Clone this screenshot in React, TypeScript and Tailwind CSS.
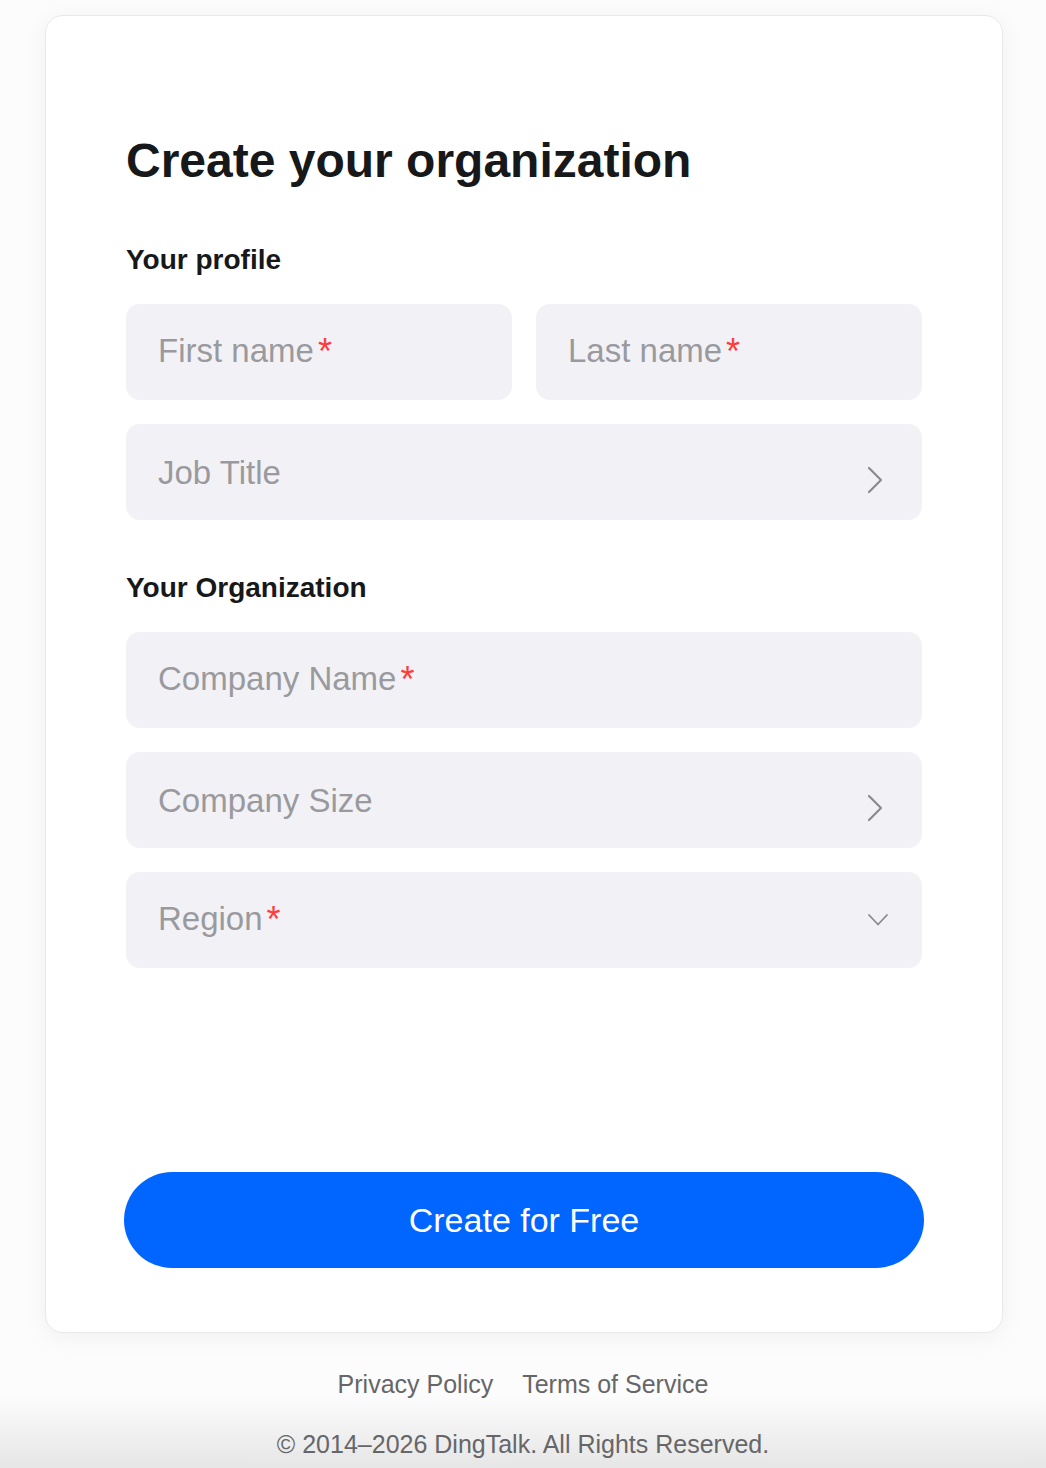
import React from "react";

const font = { fontFamily: '"Liberation Sans", Arial, sans-serif' };

function ChevronRight() {
  return (
    <svg width="18" height="28" viewBox="0 0 18 28" fill="none" className="mt-[16px] mr-[2px]">
      <path d="M3 2 L15 14 L3 26" stroke="#8a8a8e" strokeWidth="2.2" strokeLinecap="round" strokeLinejoin="round" />
    </svg>
  );
}

function ChevronDown() {
  return (
    <svg width="22" height="14" viewBox="0 0 22 14" fill="none" className="mr-[-3px]">
      <path d="M2 2 L11 11.5 L20 2" stroke="#8a8a8e" strokeWidth="1.8" strokeLinecap="round" strokeLinejoin="round" />
    </svg>
  );
}

function Field({
  label,
  required,
  right,
}: {
  label: string;
  required?: boolean;
  right?: React.ReactNode;
}) {
  return (
    <div className="flex h-[96px] items-center justify-between rounded-[14px] bg-[#f2f2f6] pl-[32px] pr-[36px]">
      <div className="flex items-start text-[33px] leading-none text-[#9a9a9e]">
        <span>{label}</span>
        {required && <span className="ml-[4px] text-[36px] leading-none text-[#ff3b3b]">*</span>}
      </div>
      {right}
    </div>
  );
}

export default function App() {
  return (
    <div
      className="flex min-h-[1468px] flex-col items-center bg-[linear-gradient(to_bottom,#fcfcfc_0%,#fcfcfc_95%,#e6e6e6_100%)]"
      style={font}
    >
      <div className="ml-[45px] mt-[15px] w-[958px] self-start rounded-[18px] border border-[#e9e9eb] bg-white px-[80px] pb-[64px] pt-[116px] shadow-[0_4px_24px_rgba(0,0,0,0.05)]">
        <h1 className="text-[48px] font-bold leading-[58px] text-[#17181a]">Create your organization</h1>
        <h2 className="mt-[56px] text-[28px] font-bold leading-none text-[#17181a]">Your profile</h2>
        <div className="mt-[30px] grid grid-cols-2 gap-[24px]">
          <Field label="First name" required />
          <Field label="Last name" required />
        </div>
        <div className="mt-[24px]">
          <Field label="Job Title" right={<ChevronRight />} />
        </div>
        <h2 className="mt-[54px] text-[28px] font-bold leading-none text-[#17181a]">Your Organization</h2>
        <div className="mt-[30px] flex flex-col gap-[24px]">
          <Field label="Company Name" required />
          <Field label="Company Size" right={<ChevronRight />} />
          <Field label="Region" required right={<ChevronDown />} />
        </div>
        <button className="mx-[-2px] mt-[204px] flex h-[96px] w-[calc(100%+4px)] items-center justify-center rounded-full bg-[#0066ff] text-[34px] text-white">
          Create for Free
        </button>
      </div>
      <div className="mt-[33px] flex gap-[29px] text-[25px] leading-[36px] text-[#666668]">
        <span>Privacy Policy</span>
        <span>Terms of Service</span>
      </div>
      <div className="mt-[24px] text-[25px] leading-[36px] text-[#666668]">© 2014–2026 DingTalk. All Rights Reserved.</div>
    </div>
  );
}
